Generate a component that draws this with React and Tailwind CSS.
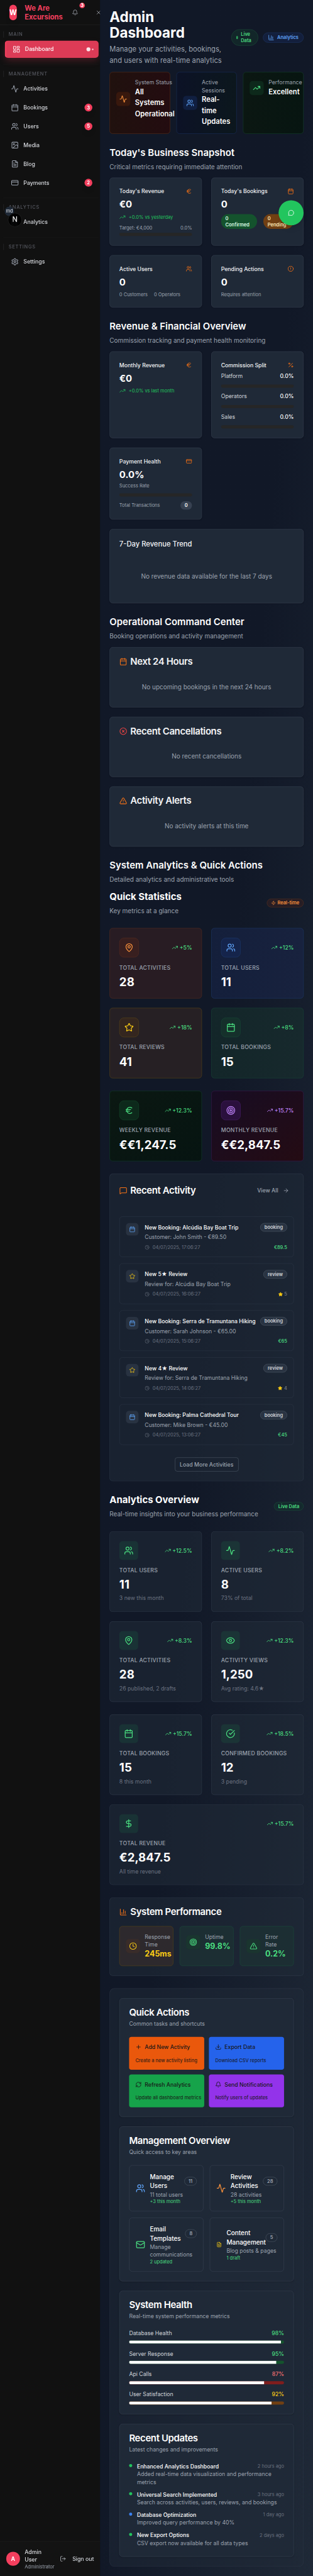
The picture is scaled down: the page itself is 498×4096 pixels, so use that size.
import React from "react";
import {
  Activity, ArrowRight, Bell, Calendar, ChartColumn, CircleAlert, CircleCheckBig, CircleX, Clock, CreditCard,
  DollarSign, Download, Euro, Eye, FileText, Image, LayoutDashboard, LogOut, Mail, MapPin, MessageCircle,
  MessageSquare, Percent, Plus, RefreshCw, Settings, Star, Target, TrendingUp, TriangleAlert, Users, X, Zap,
} from "lucide-react";

/* ---------- Sidebar ---------- */

function NavSection({ title, children, first }) {
  return (
    <section className={first ? "" : "border-t border-[#171717] pt-4"}>
      <h3 className="h-4 border-l-2 border-[#1f1f21] pl-3 text-xs leading-4 font-medium tracking-[0.1em] text-[#55575f] uppercase">
        {title}
      </h3>
      <div className="mt-2 mb-4 ml-1 flex flex-col gap-1">{children}</div>
    </section>
  );
}

function NavItem({ icon: Icon, label, badge }) {
  return (
    <a className="flex h-11 items-center gap-3 px-4 text-sm font-medium text-[#d7d9de]">
      <Icon className="size-5 text-[#9ca3af]" />
      <span>{label}</span>
      {badge && (
        <span className="ml-auto flex size-5 items-center justify-center rounded-full bg-[#f43f5e] text-xs font-bold text-white shadow-lg">
          {badge}
        </span>
      )}
    </a>
  );
}

function Sidebar() {
  return (
    <aside className="relative flex h-[6584px] w-64 shrink-0 flex-col bg-[#111111]">
      <header className="flex h-16 items-center border-b border-[#222224] pl-6">
        <div className="flex h-10 w-[19px] shrink-0 items-center justify-center rounded-xl bg-[#f43f5e] text-lg font-bold text-white shadow-lg">
          W
        </div>
        <div className="ml-5 w-[98px] shrink-0 text-lg leading-[23px] font-bold text-[#f43f5e]">We Are Excursions</div>
        <div className="relative ml-[23px] size-4 shrink-0">
          <Bell className="size-4 text-[#a7abb4]" />
          <span className="absolute top-[-17px] left-[19px] flex size-3.5 items-center justify-center rounded-full bg-[#f43f5e] text-xs leading-none font-bold text-white">
            3
          </span>
        </div>
        <X className="ml-11 size-4 shrink-0 text-[#a7abb4]" />
      </header>

      <nav className="flex flex-col pt-4 pr-1 pl-2">
        <NavSection title="Main" first>
          <a className="flex h-11 items-center gap-3 rounded-lg border-l-4 border-[#f43f5e] bg-[#dd3b56] px-4 text-sm font-medium text-white shadow-[0_8px_18px_-2px_rgba(221,59,86,0.28)]">
            <LayoutDashboard className="size-5 text-[#fbe3e7]" />
            <span>Dashboard</span>
            <span className="-mr-[3px] ml-auto flex items-center gap-1">
              <span className="size-2.5 rounded-full bg-[#fbe6ea]" />
              <span className="size-1 rounded-full bg-[#f8cdd5]" />
            </span>
          </a>
        </NavSection>
        <NavSection title="Management">
          <NavItem icon={Activity} label="Activities" />
          <NavItem icon={Calendar} label="Bookings" badge="3" />
          <NavItem icon={Users} label="Users" badge="5" />
          <NavItem icon={Image} label="Media" />
          <NavItem icon={FileText} label="Blog" />
          <NavItem icon={CreditCard} label="Payments" badge="2" />
        </NavSection>
        <NavSection title="Analytics">
          <NavItem icon={ChartColumn} label="Analytics" />
        </NavSection>
        <NavSection title="Settings">
          <NavItem icon={Settings} label="Settings" />
        </NavSection>
      </nav>

      <footer className="mt-auto flex items-center border-t border-[#202022] bg-[#131313] p-4">
        <div className="flex h-9 w-[35px] shrink-0 items-center justify-center rounded-full bg-[#f43f5e] text-sm font-bold text-white shadow-lg">
          A
        </div>
        <div className="ml-3 w-[102px]">
          <p className="w-12 text-sm font-medium text-[#dcdee2]">Admin User</p>
          <p className="text-xs text-[#9ca3af]">Administrator</p>
        </div>
        <LogOut className="size-4 shrink-0 text-[#b9bcc3]" />
        <span className="ml-4 text-sm font-medium whitespace-nowrap text-[#d1d5db]">Sign out</span>
      </footer>

      <span className="absolute top-[528px] left-3 flex size-6 items-center justify-center rounded-full bg-[#1f2937] text-xs text-[#e5e7eb]">
        md
      </span>
      <span className="absolute top-[544px] left-5 flex size-9 items-center justify-center rounded-full border border-[#2b2b2b] bg-black/90">
        <span className="bg-linear-to-b from-white from-50% to-white/50 bg-clip-text text-lg leading-none font-medium text-transparent">
          N
        </span>
      </span>
    </aside>
  );
}

/* ---------- Shared pieces ---------- */

function SectionTitle({ title, sub }) {
  return (
    <div className="mt-8 mb-4">
      <h2 className="text-2xl font-semibold text-white">{title}</h2>
      <p className="mt-2 text-base text-[#9ca3af]">{sub}</p>
    </div>
  );
}

function Card({ className = "", children }) {
  return <div className={"rounded-lg border border-[#374151] bg-[#1f2937] p-6 shadow-sm " + className}>{children}</div>;
}

function MetricHead({ title, icon: Icon }) {
  return (
    <div className="mb-2 flex h-5 items-center justify-between">
      <h3 className="text-sm font-medium text-[#f3f4f6]">{title}</h3>
      <Icon className="size-4 text-[#f97316]" />
    </div>
  );
}

function Track() {
  return <div className="h-2 rounded-full bg-[#262626]" />;
}

function Up({ children }) {
  return (
    <div className="mt-2 flex items-center gap-2 text-xs text-[#22c55e]">
      <TrendingUp className="size-4" />
      {children}
    </div>
  );
}

function Trend({ value, className = "text-[#4ade80]" }) {
  return (
    <span className={"flex items-center gap-1 text-sm font-medium " + className}>
      <TrendingUp className="size-4" />
      {value}
    </span>
  );
}

/* ---------- Header ---------- */

function StatusCard({ icon: Icon, label, value, card, box, tint }) {
  return (
    <div className={"w-0 flex-1 rounded-lg border p-4 " + card}>
      <div className="flex items-center gap-3">
        <div className={"rounded-lg p-2 " + box}>
          <Icon className={"size-5 " + tint} />
        </div>
        <div>
          <p className="text-sm text-[#9ca3af]">{label}</p>
          <p className="text-lg leading-7 font-semibold text-white">{value}</p>
        </div>
      </div>
    </div>
  );
}

function PageHeader() {
  return (
    <>
      <div className="flex items-center justify-between">
        <div className="w-[300px]">
          <h1 className="text-4xl leading-10 font-bold text-white">Admin Dashboard</h1>
          <p className="mt-2 text-lg leading-7 text-[#9ca3af]">Manage your activities, bookings, and users with real-time analytics</p>
        </div>
        <div className="flex items-center gap-3">
          <span className="flex w-[69px] items-center rounded-full border border-[#1b4a38] bg-[#122629] px-3 py-1 text-xs font-semibold text-[#4ade80]">
            <span className="mr-2 h-2 w-1 shrink-0 rounded-full bg-[#2fa35c]" />
            <span>Live Data</span>
          </span>
          <span className="flex items-center rounded-full border border-[#1d3663] bg-[#131f3c] px-3 py-1 text-xs font-semibold text-[#60a5fa]">
            <ChartColumn className="mr-2 size-4" />
            Analytics
          </span>
        </div>
      </div>
      <div className="mt-4 flex gap-4">
        <StatusCard icon={Activity} label="System Status" value="All Systems Operational"
          card="border-[#5b2a12] bg-linear-to-r from-[#20110e] to-[#230c10]" box="bg-[#38180d]" tint="text-[#fb923c]" />
        <StatusCard icon={Users} label="Active Sessions" value="Real-time Updates"
          card="border-[#172b57] bg-linear-to-r from-[#0c1226] to-[#0c171d]" box="bg-[#101f40]" tint="text-[#60a5fa]" />
        <StatusCard icon={TrendingUp} label="Performance" value="Excellent"
          card="border-[#113d24] bg-linear-to-r from-[#0b1712] to-[#071511]" box="bg-[#0d291b]" tint="text-[#4ade80]" />
      </div>
    </>
  );
}

/* ---------- Snapshot, revenue, operations ---------- */

function Snapshot() {
  return (
    <>
      <SectionTitle title="Today's Business Snapshot" sub="Critical metrics requiring immediate attention" />
      <div className="grid grid-cols-2 gap-6">
        <Card>
          <MetricHead title="Today's Revenue" icon={Euro} />
          <p className="text-2xl font-bold text-white">€0</p>
          <Up>+0.0% vs yesterday</Up>
          <div className="mt-3 mb-1 flex justify-between text-xs text-[#9ca3af]">
            <span>Target: €4,000</span>
            <span>0.0%</span>
          </div>
          <Track />
        </Card>
        <Card>
          <MetricHead title="Today's Bookings" icon={Calendar} />
          <p className="text-2xl font-bold text-white">0</p>
          <div className="mt-2 flex gap-4 text-xs font-semibold">
            <span className="w-[92px] rounded-full border border-transparent bg-[#14532d] px-2.5 py-0.5 text-[#dcfce7]">
              0<br />Confirmed
            </span>
            <span className="w-[77px] rounded-full border border-transparent bg-[#713f12] px-2.5 py-0.5 text-[#fde8b8]">
              0<br />Pending
            </span>
          </div>
        </Card>
        <Card>
          <MetricHead title="Active Users" icon={Users} />
          <p className="text-2xl font-bold text-white">0</p>
          <div className="mt-2 flex gap-4 text-xs text-[#9ca3af]">
            <span>0 Customers</span>
            <span>0 Operators</span>
          </div>
        </Card>
        <Card>
          <MetricHead title="Pending Actions" icon={CircleAlert} />
          <p className="text-2xl font-bold text-white">0</p>
          <p className="mt-2 text-xs text-[#9ca3af]">Requires attention</p>
        </Card>
      </div>
    </>
  );
}

function Revenue() {
  return (
    <>
      <SectionTitle title="Revenue & Financial Overview" sub="Commission tracking and payment health monitoring" />
      <div className="grid grid-cols-2 gap-6">
        <Card>
          <MetricHead title="Monthly Revenue" icon={Euro} />
          <p className="text-2xl font-bold text-white">€0</p>
          <Up>+0.0% vs last month</Up>
        </Card>
        <Card>
          <MetricHead title="Commission Split" icon={Percent} />
          <div className="flex flex-col gap-3">
            {["Platform", "Operators", "Sales"].map((name) => (
              <React.Fragment key={name}>
                <div className="flex justify-between text-sm">
                  <span className="text-[#d1d5db]">{name}</span>
                  <span className="font-medium text-white">0.0%</span>
                </div>
                <Track />
              </React.Fragment>
            ))}
          </div>
        </Card>
        <Card>
          <MetricHead title="Payment Health" icon={CreditCard} />
          <p className="text-2xl font-bold text-white">0.0%</p>
          <p className="mt-1 mb-3 text-xs text-[#9ca3af]">Success Rate</p>
          <Track />
          <div className="mt-3 flex items-center justify-between text-xs text-[#9ca3af]">
            <span>Total Transactions</span>
            <span className="rounded-full border border-transparent bg-[#374151] px-2.5 py-0.5 font-semibold text-white">0</span>
          </div>
        </Card>
        <Card className="col-span-2">
          <h3 className="text-lg leading-7 font-medium text-[#f3f4f6]">7-Day Revenue Trend</h3>
          <p className="mt-6 py-8 text-center text-base text-[#9ca3af]">No revenue data available for the last 7 days</p>
        </Card>
      </div>
    </>
  );
}

function Operations() {
  const rows = [
    [Calendar, "text-[#f97316]", "Next 24 Hours", "No upcoming bookings in the next 24 hours"],
    [CircleX, "text-[#ef4444]", "Recent Cancellations", "No recent cancellations"],
    [TriangleAlert, "text-[#f97316]", "Activity Alerts", "No activity alerts at this time"],
  ];
  return (
    <>
      <SectionTitle title="Operational Command Center" sub="Booking operations and activity management" />
      <div className="flex flex-col gap-6">
        {rows.map(([Icon, tint, title, message]) => (
          <Card key={title}>
            <div className="flex items-center gap-2">
              <Icon className={"size-5 " + tint} />
              <h3 className="text-2xl leading-6 font-semibold tracking-tight text-[#f3f4f6]">{title}</h3>
            </div>
            <p className="mt-6 py-4 text-center text-base text-[#9ca3af]">{message}</p>
          </Card>
        ))}
      </div>
    </>
  );
}

/* ---------- Quick statistics ---------- */

function StatCard({ icon: Icon, value, label, trend, card, box, tint, trendTint }) {
  return (
    <div className={"rounded-lg border p-6 " + card}>
      <div className="flex items-center justify-between">
        <div className={"rounded-xl border p-3 " + box}>
          <Icon className={"size-6 " + tint} />
        </div>
        <Trend value={trend} className={trendTint} />
      </div>
      <p className="mt-4 text-sm font-medium tracking-wide text-[#9ca3af] uppercase">{label}</p>
      <p className="mt-2 text-3xl leading-9 font-bold text-white">{value}</p>
    </div>
  );
}

function QuickStatistics() {
  return (
    <>
      <div className="flex items-center justify-between">
        <div>
          <h2 className="text-2xl font-bold text-white">Quick Statistics</h2>
          <p className="mt-2 text-base text-[#9ca3af]">Key metrics at a glance</p>
        </div>
        <span className="flex items-center gap-1 rounded-full border border-[#57301f] bg-[#271d24] px-2.5 py-0.5 text-xs font-semibold text-[#fb923c]">
          <Zap className="size-3" />
          Real-time
        </span>
      </div>
      <div className="mt-8 grid grid-cols-2 gap-6">
        <StatCard icon={MapPin} label="Total Activities" value="28" trend="+5%" card="border-[#562c20] bg-[#281c23]" box="border-[#562c20] bg-[#381f1f]" tint="text-[#fb923c]" />
        <StatCard icon={Users} label="Total Users" value="11" trend="+12%" card="border-[#1d386b] bg-linear-to-r from-[#141f3b] to-[#18223e]" box="border-[#1d386b] bg-[#15244b]" tint="text-[#60a5fa]" />
        <StatCard icon={Star} label="Total Reviews" value="41" trend="+18%" card="border-[#574419] bg-[#262024]" box="border-[#574419] bg-[#34261f]" tint="text-[#facc15]" />
        <StatCard icon={Calendar} label="Total Bookings" value="15" trend="+8%" card="border-[#184737] bg-linear-to-r from-[#132629] to-[#17292d]" box="border-[#184737] bg-[#15302b]" tint="text-[#4ade80]" />
      </div>
      <div className="mt-8 grid grid-cols-2 gap-6">
        <StatCard icon={Euro} label="Weekly Revenue" value="€€1,247.5" trend="+12.3%" card="border-[#103c23] bg-linear-to-br from-[#0b1812] to-[#061411]" box="border-[#15482b] bg-[#0d291b]" tint="text-[#4ade80]" />
        <StatCard icon={Target} label="Monthly Revenue" value="€€2,847.5" trend="+15.7%" card="border-[#3a1748] bg-linear-to-br from-[#170c23] to-[#240b13]" box="border-[#48206a] bg-[#2a103d]" tint="text-[#c084fc]" trendTint="text-[#c084fc]" />
      </div>
    </>
  );
}

/* ---------- Recent activity ---------- */

const ACTIVITIES = [
  { type: "booking", title: "New Booking: Alcúdia Bay Boat Trip", text: "Customer: John Smith - €89.50", time: "04/07/2025, 17:06:27", amount: "€89.5" },
  { type: "review", title: "New 5★ Review", text: "Review for: Alcúdia Bay Boat Trip", time: "04/07/2025, 16:06:27", rating: "5" },
  { type: "booking", title: "New Booking: Serra de Tramuntana Hiking", text: "Customer: Sarah Johnson - €65.00", time: "04/07/2025, 15:06:27", amount: "€65" },
  { type: "review", title: "New 4★ Review", text: "Review for: Serra de Tramuntana Hiking", time: "04/07/2025, 14:06:27", rating: "4" },
  { type: "booking", title: "New Booking: Palma Cathedral Tour", text: "Customer: Mike Brown - €45.00", time: "04/07/2025, 13:06:27", amount: "€45" },
];

function RecentActivity() {
  return (
    <div className="mt-8 rounded-lg border border-[#374151]/60 bg-[#1f2937]/60 p-6">
      <div className="flex h-9 items-center justify-between">
        <div className="flex items-center gap-2">
          <MessageSquare className="size-5 text-[#f97316]" />
          <h3 className="text-2xl leading-6 font-semibold tracking-tight text-white">Recent Activity</h3>
        </div>
        <span className="flex items-center gap-3 px-3 text-sm font-medium text-[#9ca3af]">
          View All
          <ArrowRight className="size-4" />
        </span>
      </div>
      <div className="mt-12 flex flex-col gap-4">
        {ACTIVITIES.map((a) => (
          <div key={a.time} className="flex items-start gap-4 rounded-lg border border-[#374151]/60 p-4">
            <div className="rounded-lg bg-[#374151]/50 p-2">
              {a.type === "booking" ? <Calendar className="size-4 text-[#60a5fa]" /> : <Star className="size-4 text-[#facc15]" />}
            </div>
            <div className="flex-1">
              <div className="flex items-center justify-between">
                <h4 className="text-sm font-medium whitespace-nowrap text-white">{a.title}</h4>
                <span className="rounded-full border border-[#4b5563] bg-[#374151]/50 px-2.5 py-0.5 text-xs font-semibold text-[#d1d5db]">{a.type}</span>
              </div>
              <p className="mt-1 text-sm text-[#9ca3af]">{a.text}</p>
              <div className="mt-2 flex items-center justify-between text-xs text-[#6b7280]">
                <span className="flex items-center gap-2">
                  <Clock className="size-3" />
                  {a.time}
                </span>
                {a.amount ? (
                  <span className="font-medium text-[#4ade80]">{a.amount}</span>
                ) : (
                  <span className="flex items-center gap-1 text-[#7f8693]">
                    <Star className="size-3 fill-[#facc15] text-[#facc15]" />
                    {a.rating}
                  </span>
                )}
              </div>
            </div>
          </div>
        ))}
      </div>
      <div className="mt-8 flex justify-center">
        <span className="flex h-9 items-center rounded-md border border-[#4b5563] px-3 text-sm font-medium text-[#9ca3af]">Load More Activities</span>
      </div>
    </div>
  );
}

/* ---------- Analytics overview ---------- */

function AnalyticsCard({ icon: Icon, trend, label, value, sub }) {
  return (
    <div className="rounded-lg border border-[#374151]/60 bg-[#1f2937]/60 p-6">
      <div className="flex items-center justify-between">
        <div className="rounded-lg bg-[#22c55e]/10 p-3">
          <Icon className="size-6 text-[#4ade80]" />
        </div>
        <Trend value={trend} />
      </div>
      <p className="mt-4 text-sm font-medium tracking-wide text-[#9ca3af] uppercase">{label}</p>
      <p className="mt-2 text-3xl leading-9 font-bold text-white">{value}</p>
      <p className="mt-2 text-sm text-[#6b7280]">{sub}</p>
    </div>
  );
}

function PerfTile({ icon: Icon, label, value, card, box, tint }) {
  return (
    <div className={"w-0 flex-1 rounded-lg border p-4 " + card}>
      <div className="flex items-center gap-3">
        <div className={"rounded-lg p-2 " + box}>
          <Icon className={"size-5 " + tint} />
        </div>
        <div>
          <p className="text-sm text-[#9ca3af]">{label}</p>
          <p className={"text-xl leading-7 font-bold " + tint}>{value}</p>
        </div>
      </div>
    </div>
  );
}

function AnalyticsOverview() {
  return (
    <>
      <div className="mt-8 flex items-center justify-between">
        <div>
          <h2 className="text-2xl font-bold text-white">Analytics Overview</h2>
          <p className="mt-2 text-base text-[#9ca3af]">Real-time insights into your business performance</p>
        </div>
        <span className="rounded-full border border-[#1b4a38] bg-[#142a2d] px-2.5 py-0.5 text-xs font-semibold text-[#4ade80]">Live Data</span>
      </div>
      <div className="mt-8 grid grid-cols-2 gap-6">
        <AnalyticsCard icon={Users} trend="+12.5%" label="Total Users" value="11" sub="3 new this month" />
        <AnalyticsCard icon={Activity} trend="+8.2%" label="Active Users" value="8" sub="73% of total" />
        <AnalyticsCard icon={MapPin} trend="+8.3%" label="Total Activities" value="28" sub="26 published, 2 drafts" />
        <AnalyticsCard icon={Eye} trend="+12.3%" label="Activity Views" value="1,250" sub="Avg rating: 4.6★" />
      </div>
      <div className="mt-8 mb-6 grid grid-cols-2 gap-6">
        <AnalyticsCard icon={Calendar} trend="+15.7%" label="Total Bookings" value="15" sub="8 this month" />
        <AnalyticsCard icon={CircleCheckBig} trend="+18.5%" label="Confirmed Bookings" value="12" sub="3 pending" />
      </div>
      <AnalyticsCard icon={DollarSign} trend="+15.7%" label="Total Revenue" value="€2,847.5" sub="All time revenue" />
      <div className="mt-8 rounded-lg border border-[#374151]/60 bg-[#1f2937]/60 p-6">
        <div className="flex items-center gap-2">
          <ChartColumn className="size-5 text-[#f97316]" />
          <h3 className="text-2xl leading-6 font-semibold tracking-tight text-white">System Performance</h3>
        </div>
        <div className="mt-6 flex gap-4">
          <PerfTile icon={Clock} label="Response Time" value="245ms" card="border-[#574419] bg-[#2d292d]" box="bg-[#392c29]" tint="text-[#facc15]" />
          <PerfTile icon={Target} label="Uptime" value="99.8%" card="border-[#1b4b3c] bg-[#1c2e33]" box="bg-[#1a352f]" tint="text-[#4ade80]" />
          <PerfTile icon={TriangleAlert} label="Error Rate" value="0.2%" card="border-[#1b4b3c] bg-[#1c2e33]" box="bg-[#1a352f]" tint="text-[#4ade80]" />
        </div>
      </div>
    </>
  );
}

/* ---------- Management panel ---------- */

function PanelCard({ title, sub, children }) {
  return (
    <Card>
      <h3 className="text-2xl leading-6 font-semibold tracking-tight text-white">{title}</h3>
      <p className="mt-1.5 mb-6 text-sm text-[#9ca3af]">{sub}</p>
      {children}
    </Card>
  );
}

function ActionButton({ icon: Icon, title, text, color }) {
  return (
    <button className={"flex w-[192px] flex-col items-start gap-4 rounded-md p-4 text-[#171717] " + color}>
      <span className="flex items-center gap-2 text-sm font-medium">
        <Icon className="size-4" />
        {title}
      </span>
      <span className="text-xs font-medium whitespace-nowrap opacity-85">{text}</span>
    </button>
  );
}

function ManageTile({ icon: Icon, tint, title, count, text, note }) {
  return (
    <div className="flex w-[190px] items-center gap-3 rounded-lg border border-[#374151] p-4">
      <Icon className={"size-6 " + tint} />
      <div className="flex-1">
        <div className="flex items-center justify-between">
          <p className="text-base font-medium text-white">{title}</p>
          <span className="rounded-full border border-[#4b5563] px-2.5 py-0.5 text-xs font-semibold text-[#9ca3af]">{count}</span>
        </div>
        <p className="text-sm text-[#9ca3af]">{text}</p>
        <p className="text-xs text-[#4ade80]">{note}</p>
      </div>
    </div>
  );
}

const HEALTH = [
  ["Database Health", 98, "text-[#4ade80]", "bg-[#14532d]"],
  ["Server Response", 95, "text-[#4ade80]", "bg-[#14532d]"],
  ["Api Calls", 87, "text-[#f87171]", "bg-[#7f1d1d]"],
  ["User Satisfaction", 92, "text-[#facc15]", "bg-[#713f12]"],
];

const UPDATES = [
  ["Enhanced Analytics Dashboard", "2 hours ago", "Added real-time data visualization and performance metrics", "bg-[#22c55e]"],
  ["Universal Search Implemented", "3 hours ago", "Search across activities, users, reviews, and bookings", "bg-[#22c55e]"],
  ["Database Optimization", "1 day ago", "Improved query performance by 40%", "bg-[#3b82f6]"],
  ["New Export Options", "2 days ago", "CSV export now available for all data types", "bg-[#22c55e]"],
];

function ManagementPanel() {
  return (
    <div className="mt-8 flex flex-col gap-6 rounded-xl border border-[#374151]/50 bg-[#1f2937]/50 p-6">
      <PanelCard title="Quick Actions" sub="Common tasks and shortcuts">
        <div className="grid grid-cols-2 gap-3">
          <ActionButton icon={Plus} title="Add New Activity" text="Create a new activity listing" color="bg-[#ea580c]" />
          <ActionButton icon={Download} title="Export Data" text="Download CSV reports" color="bg-[#2563eb]" />
          <ActionButton icon={RefreshCw} title="Refresh Analytics" text="Update all dashboard metrics" color="bg-[#16a34a]" />
          <ActionButton icon={Bell} title="Send Notifications" text="Notify users of updates" color="bg-[#9333ea]" />
        </div>
      </PanelCard>
      <PanelCard title="Management Overview" sub="Quick access to key areas">
        <div className="grid grid-cols-2 gap-4">
          <ManageTile icon={Users} tint="text-[#60a5fa]" title="Manage Users" count="11" text="11 total users" note="+3 this month" />
          <ManageTile icon={Activity} tint="text-[#fb923c]" title="Review Activities" count="28" text="28 activities" note="+5 this month" />
          <ManageTile icon={Mail} tint="text-[#4ade80]" title="Email Templates" count="8" text="Manage communications" note="2 updated" />
          <ManageTile icon={FileText} tint="text-[#facc15]" title="Content Management" count="5" text="Blog posts & pages" note="1 draft" />
        </div>
      </PanelCard>
      <PanelCard title="System Health" sub="Real-time system performance metrics">
        <div className="flex flex-col gap-4">
          {HEALTH.map(([name, value, tint, track]) => (
            <div key={name}>
              <div className="mb-2 flex justify-between text-sm">
                <span className="text-[#d1d5db]">{name}</span>
                <span className={"font-medium " + tint}>{value}%</span>
              </div>
              <div className={"h-2 overflow-hidden rounded-full " + track}>
                <div className="h-full bg-[#fafafa]" style={{ width: value + "%" }} />
              </div>
            </div>
          ))}
        </div>
      </PanelCard>
      <PanelCard title="Recent Updates" sub="Latest changes and improvements">
        <div className="flex flex-col gap-3">
          {UPDATES.map(([title, time, text, dot]) => (
            <div key={title} className="flex items-start gap-3">
              <span className={"mt-1 size-2 shrink-0 rounded-full " + dot} />
              <div className="flex-1">
                <div className="flex items-center justify-between">
                  <h4 className="text-sm font-medium text-white">{title}</h4>
                  <span className="text-xs text-[#6b7280]">{time}</span>
                </div>
                <p className="text-sm text-[#9ca3af]">{text}</p>
              </div>
            </div>
          ))}
        </div>
      </PanelCard>
    </div>
  );
}

export default function App() {
  return (
    <div className="h-[4096px] w-[498px] overflow-hidden bg-[#111827]">
      <div className="relative flex h-[6584px] w-[800px] origin-top-left scale-x-[0.6225] scale-y-[0.62211] font-['Inter',sans-serif]">
        <Sidebar />
        <main className="relative w-[544px] bg-linear-to-br from-[#111827] via-[#111827] to-[#1f2937] p-6">
          <PageHeader />
          <Snapshot />
          <Revenue />
          <Operations />
          <SectionTitle title="System Analytics & Quick Actions" sub="Detailed analytics and administrative tools" />
          <QuickStatistics />
          <RecentActivity />
          <AnalyticsOverview />
          <ManagementPanel />
        </main>
        <button className="absolute top-[512px] right-6 flex size-16 items-center justify-center rounded-full bg-[#22c55e] text-white shadow-lg">
          <MessageCircle className="size-4" />
        </button>
      </div>
    </div>
  );
}
